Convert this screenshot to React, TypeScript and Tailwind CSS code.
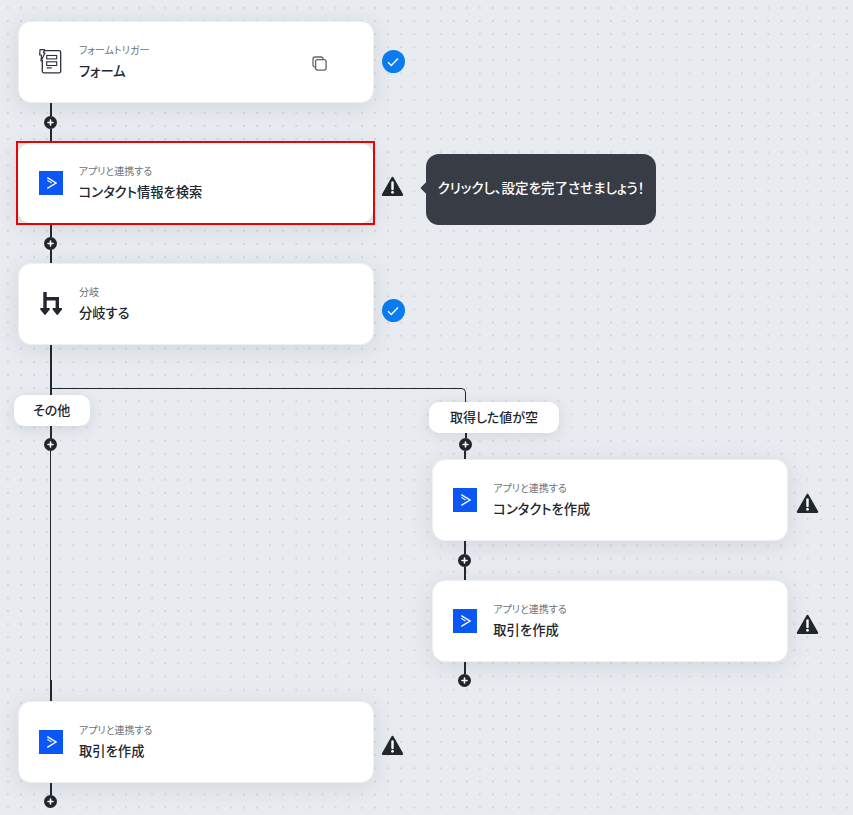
import type { ReactNode } from "react";

function Plus() {
  return (
    <div className="flex h-[13px] w-[13px] shrink-0 items-center justify-center rounded-full bg-[#22272e]">
      <svg width="7" height="7" viewBox="0 0 7 7"><path d="M3.5 1v5M1 3.5h5" stroke="#fff" strokeWidth="1.6" strokeLinecap="round" /></svg>
    </div>
  );
}

function Connector() {
  return (
    <div className="ml-[26.5px] flex h-[39.5px] w-[13px] flex-col items-center">
      <div className="w-[2px] flex-1 bg-[#22272e]" />
      <Plus />
      <div className="w-[2px] flex-1 bg-[#22272e]" />
    </div>
  );
}

function AppLogo() {
  return (
    <svg width="24" height="24" viewBox="0 0 24 24">
      <rect width="24" height="24" fill="#0b57f5" />
      <path d="M8.3 6.7 17 12 8.3 17.3" fill="none" stroke="#fff" strokeWidth="1.4" />
      <path d="M8.3 9.3 12.6 12" fill="none" stroke="#e4ebff" strokeWidth="1.2" />
    </svg>
  );
}

function FormIcon() {
  return (
    <svg className="-mt-[1px]" width="23" height="25" viewBox="0 0 23 25" fill="none" stroke="#2b3038">
      <path d="M5 1.700h15.200a1.500 1.500 0 0 1 1.500 1.500v19.100a1.500 1.500 0 0 1-1.500 1.500H4.800a1.500 1.500 0 0 1-1.500-1.500V11" strokeWidth="1.300" />
      <path d="M1 .7h4.500L4.500 4H6L2 12l.5-6H.7z" strokeWidth="1.200" fill="#fff" strokeLinejoin="round" />
      <rect x="7.700" y="6.500" width="10" height="3.400" strokeWidth="1.100" />
      <rect x="7.700" y="12.800" width="10" height="3.700" strokeWidth="1.100" />
      <path d="M7.700 18.900h5" strokeWidth="1.200" />
    </svg>
  );
}

function BranchIcon() {
  return (
    <svg className="ml-[1px] -mt-[1px]" width="23" height="23" viewBox="0 0 23 23" fill="none">
      <path d="M5 0v17M5 6.800h12.300V17" stroke="#22272e" strokeWidth="3.400" />
      <path d="M1 17h8l-4 5zM13.300 17h8l-4 5z" fill="#22272e" stroke="#22272e" strokeWidth="1.800" strokeLinejoin="round" />
    </svg>
  );
}

function Warn({ className }: { className: string }) {
  return (
    <svg className={`shrink-0 ${className}`} width="23" height="21" viewBox="0 0 23 21">
      <path d="M11.500 2 21 18.800H2z" fill="#22272e" stroke="#22272e" strokeWidth="2.400" strokeLinejoin="round" />
      <path d="M11.500 6.500v6.500" stroke="#fff" strokeWidth="2.400" strokeLinecap="round" />
      <circle cx="11.500" cy="16.300" r="1.400" fill="#fff" />
    </svg>
  );
}

function Check({ className }: { className: string }) {
  return (
    <div className={`flex h-[23px] w-[23px] shrink-0 items-center justify-center rounded-full bg-[#0a7cf0] ${className}`}>
      <svg width="12" height="10" viewBox="0 0 12 10" fill="none"><path d="M1 5.200 4.300 8.500 11 1.500" stroke="#fff" strokeWidth="1.400" /></svg>
    </div>
  );
}

function Card({ sub, title, icon, selected, children }: { sub: string; title: string; icon: ReactNode; selected?: boolean; children?: ReactNode }) {
  return (
    <div
      className={`relative flex shrink-0 items-center rounded-[13px] bg-white shadow-[0_4px_22px_rgba(60,70,90,0.12)] ${selected ? "h-full w-full pl-[21px]" : "h-[81.5px] w-[356.5px] border border-[#eef0f4] pl-[20.300px]"}`}
    >
      <div className="flex w-[40px] shrink-0 items-center">{icon}</div>
      <div className="flex flex-col gap-[3px] pb-[1px]">
        <div className="text-[10px] leading-[16px] text-[#6d7178]">{sub}</div>
        <div className="text-[13.300px] leading-[20px] font-medium text-[#22272e]">{title}</div>
      </div>
      {children}
    </div>
  );
}

function Label({ className, text }: { className: string; text: string }) {
  return (
    <div
      className={`relative z-10 flex h-[31px] shrink-0 items-center justify-center rounded-[10px] bg-white text-[13px] font-medium text-[#22272e] shadow-[0_3px_14px_rgba(60,70,90,0.13)] ${className}`}
    >
      {text}
    </div>
  );
}

export default function App() {
  return (
    <div
      className="relative h-[815px] w-[853px] overflow-hidden bg-[#e8ebf0] bg-[radial-gradient(circle,#d2d6dc_1.1px,transparent_1.1px)] bg-[length:13.12px_13.12px] bg-[position:1.4px_1.4px] pt-[21px] pl-[17.700px] font-['Inter','Noto_Sans_CJK_JP',sans-serif] [font-feature-settings:'palt']"
    >
      <div className="flex items-center">
        <Card sub="フォームトリガー" title="フォーム" icon={<FormIcon />}>
          <svg className="absolute left-[293.500px] top-[34px]" width="15" height="15" viewBox="0 0 15 15" fill="none" stroke="#5f6671" strokeWidth="1.300">
            <rect x="3.600" y="3.600" width="10.500" height="10.500" rx="2" />
            <path d="M3.600 11H3a2 2 0 0 1-2-2V3a2 2 0 0 1 2-2h6a2 2 0 0 1 2 2v.6" />
          </svg>
        </Card>
        <Check className="ml-[7.800px]" />
      </div>

      <Connector />

      <div className="relative z-10 flex items-center">
        <div className="-mt-[1px] -mb-[1.5px] -ml-[2px] h-[84px] w-[359px] shrink-0 border-2 border-[#f00000]">
          <Card sub="アプリと連携する" title="コンタクト情報を検索" icon={<AppLogo />} selected />
        </div>
        <Warn className="mt-[8px] ml-[6.6px]" />
        <div className="relative mt-[12px] -mb-[2px] ml-[21.700px] flex h-[70.700px] w-[230px] shrink-0 items-center justify-center rounded-[13px] bg-[#383c44] pb-[3px] text-[13.500px] font-medium whitespace-nowrap text-white">
          <div className="absolute top-[29.500px] left-[-4px] h-[8px] w-[8px] rotate-45 rounded-[1px] bg-[#383c44]" />
          クリックし、設定を完了させましょう！
        </div>
      </div>

      <Connector />

      <div className="flex items-center">
        <Card sub="分岐" title="分岐する" icon={<BranchIcon />} />
        <Check className="mt-[14px] ml-[7.800px]" />
      </div>

      <div className="relative flex">
        <div className="absolute top-[43.500px] left-[32.800px] h-[14px] w-[416px] rounded-tr-[5px] border-t border-r border-[#22272e]" />

        <div className="flex w-[414.300px] shrink-0 flex-col">
          <div className="ml-[32px] h-[50.500px] w-[2px] bg-[#22272e]" />
          <Label className="-ml-[4px] w-[76px]" text="その他" />
          <div className="ml-[32px] h-[12px] w-[2px] bg-[#22272e]" />
          <div className="ml-[26.500px]"><Plus /></div>
          <div className="ml-[32px] h-[229px] w-[1px] bg-[#22272e]" />
          <div className="ml-[32px] h-[21px] w-[2px] bg-[#22272e]" />
          <div className="flex items-center">
            <Card sub="アプリと連携する" title="取引を作成" icon={<AppLogo />} />
            <Warn className="mt-[8px] ml-[7.100px]" />
          </div>
          <div className="ml-[32px] h-[12.500px] w-[2px] bg-[#22272e]" />
          <div className="ml-[26.500px]"><Plus /></div>
        </div>

        <div className="flex flex-col pt-[57.500px]">
          <Label className="-ml-[3px] w-[130px]" text="取得した値が空" />
          <div className="ml-[33px] h-[5px] w-[2px] bg-[#22272e]" />
          <div className="ml-[27px]"><Plus /></div>
          <div className="ml-[32.500px] h-[8px] w-[2px] bg-[#22272e]" />
          <div className="flex items-center">
            <Card sub="アプリと連携する" title="コンタクトを作成" icon={<AppLogo />} />
            <Warn className="mt-[8px] ml-[8px]" />
          </div>
          <Connector />
          <div className="flex items-center">
            <Card sub="アプリと連携する" title="取引を作成" icon={<AppLogo />} />
            <Warn className="mt-[8px] ml-[8px]" />
          </div>
          <div className="ml-[32.500px] h-[12.500px] w-[2px] bg-[#22272e]" />
          <div className="ml-[26.500px]"><Plus /></div>
        </div>
      </div>
    </div>
  );
}
